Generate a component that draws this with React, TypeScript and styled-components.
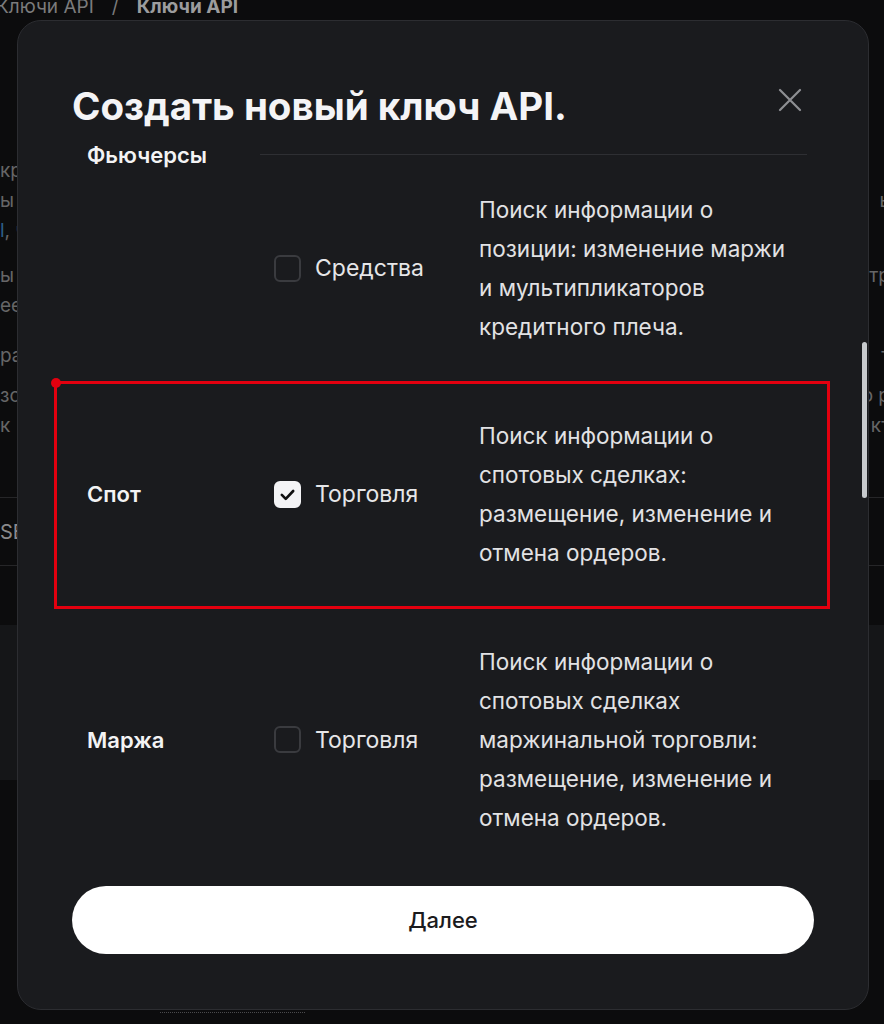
import React, { useLayoutEffect, useRef } from "react";
import styled, { createGlobalStyle, css } from "styled-components";

const GlobalStyle = createGlobalStyle`
  html, body {
    margin: 0;
    padding: 0;
    background: #0c0c0d;
    overflow: hidden;
  }
  body {
    font-family: Inter, "Noto Sans", sans-serif;
  }
  * {
    box-sizing: border-box;
  }
`;

/* ---------- page behind the dialog (only its edges show) ---------- */

const Page = styled.div`
  width: 890px;
  height: 1030px;
  overflow: hidden;
  color: #666667;
`;

const Crumbs = styled.div`
  display: flex;
  gap: 18px;
  margin: -3px 0 0 -4px;
  font-size: 19px;
  line-height: 20px;
  color: #7b7b7c;
`;

const CrumbCurrent = styled.span`
  font-weight: 700;
  color: #9c9c9d;
`;

const Intro = styled.div`
  margin-top: 139px;
  font-size: 19px;
  line-height: 30px;
`;

const Para = styled.div<{ $gap: number }>`
  margin-bottom: ${(p) => p.$gap}px;
`;

const BackLine = styled.div`
  display: flex;
  justify-content: space-between;
  height: 30px;
  white-space: nowrap;
  a {
    color: #2d5d8a;
    text-decoration: none;
  }
`;

const Tabs = styled.div`
  margin-top: 56px;
  height: 69px;
  display: flex;
  align-items: center;
  border-top: 1px solid #262628;
  border-bottom: 1px solid #262628;
  font-size: 20px;
  color: #8a8a8b;
`;

const Band = styled.div`
  margin-top: 59px;
  height: 155px;
  background: #151618;
`;

const Dotted = styled.div`
  margin: 232px 0 0 160px;
  width: 145px;
  border-top: 1px dotted #4a4a4c;
`;

/* ---------- dialog ---------- */

const Modal = styled.div`
  position: fixed;
  top: 20px;
  left: 17px;
  width: 852px;
  height: 990px;
  display: flex;
  flex-direction: column;
  padding: 0 54px 55px;
  background: #1a1b1e;
  border: 1px solid #2c2d31;
  border-radius: 24px;
`;

const Header = styled.div`
  display: flex;
  justify-content: space-between;
  align-items: flex-start;
  padding-top: 61px;
`;

const Title = styled.h2`
  margin: 0;
  font-size: 38.5px;
  line-height: 48px;
  font-weight: 700;
  color: #f4f4f6;
`;

const CloseButton = styled.button`
  width: 38px;
  height: 38px;
  margin: -1px 5px 0 0;
  display: flex;
  align-items: center;
  justify-content: center;
  padding: 0;
  border: 0;
  background: none;
  cursor: pointer;
`;

const Body = styled.div`
  flex: 1;
  min-height: 0;
  margin: 10px -54px 0;
  padding: 0 54px;
  overflow: hidden;
  position: relative;
`;

const Section = styled.div`
  position: relative;
  display: grid;
  grid-template-columns: 188px 1fr;
`;

const SectionLabel = styled.div`
  align-self: center;
  padding-left: 15px;
  font-size: 22px;
  font-weight: 600;
  color: #f3f3f4;
`;

const Row = styled.div<{ $divided?: boolean }>`
  display: grid;
  grid-template-columns: 205px 1fr;
  align-items: center;
  padding: 35px 0;
  ${(p) =>
    p.$divided &&
    css`
      border-top: 1px solid #2e2f33;
      margin-right: 7px;
    `}
`;

const Permission = styled.label`
  display: flex;
  align-items: center;
  gap: 14px;
  padding-left: 14px;
  font-size: 23px;
  color: #e6e6e8;
`;

const Box = styled.span<{ $checked?: boolean }>`
  width: 27px;
  height: 27px;
  flex: none;
  display: flex;
  align-items: center;
  justify-content: center;
  border-radius: 6px;
  border: 2px solid ${(p) => (p.$checked ? "#f4f4f6" : "#3a3b3f")};
  background: ${(p) => (p.$checked ? "#f4f4f6" : "transparent")};
`;

const Description = styled.div`
  padding-left: 14px;
  font-size: 22.5px;
  line-height: 39px;
  color: #e2e2e4;
  white-space: nowrap;
`;

const Highlight = styled.div`
  position: absolute;
  top: 0;
  bottom: -2px;
  left: -18px;
  right: -16px;
  border: 3px solid #e3000f;
  pointer-events: none;
  &::before {
    content: "";
    position: absolute;
    left: -6px;
    top: -6px;
    width: 10px;
    height: 10px;
    border-radius: 50%;
    background: #e3000f;
  }
`;

const ScrollThumb = styled.div`
  position: absolute;
  right: 1px;
  top: 321px;
  width: 5px;
  height: 156px;
  border-radius: 3px;
  background: #c7cacd;
`;

const Footer = styled.div`
  padding-top: 24px;
`;

const NextButton = styled.button`
  width: 100%;
  height: 68px;
  border: 0;
  border-radius: 34px;
  background: #ffffff;
  font-family: Inter, "Noto Sans", sans-serif;
  font-size: 22px;
  font-weight: 500;
  color: #1b1b1d;
  cursor: pointer;
`;

interface PermissionRow {
  name: string;
  checked?: boolean;
  lines: string[];
}

interface PermissionGroup {
  label: string;
  highlighted?: boolean;
  rows: PermissionRow[];
}

const groups: PermissionGroup[] = [
  {
    label: "Фьючерсы",
    rows: [
      {
        name: "Торговля",
        lines: ["Поиск информации о", "фьючерсных сделках:", "размещение, изменение и", "отмена ордеров."],
      },
      {
        name: "Средства",
        lines: ["Поиск информации о", "позиции: изменение маржи", "и мультипликаторов", "кредитного плеча."],
      },
    ],
  },
  {
    label: "Спот",
    highlighted: true,
    rows: [
      {
        name: "Торговля",
        checked: true,
        lines: ["Поиск информации о", "спотовых сделках:", "размещение, изменение и", "отмена ордеров."],
      },
    ],
  },
  {
    label: "Маржа",
    rows: [
      {
        name: "Торговля",
        lines: [
          "Поиск информации о",
          "спотовых сделках",
          "маржинальной торговли:",
          "размещение, изменение и",
          "отмена ордеров.",
        ],
      },
    ],
  },
];

// edge fragments of the page text that peek out on both sides of the dialog
const backParagraphs: { gap: number; lines: [React.ReactNode, string][] }[] = [
  {
    gap: 15,
    lines: [
      ["кр", ""],
      ["ы", "ь"],
      [<><a href="#">l</a>, ч</>, ""],
    ],
  },
  {
    gap: 20,
    lines: [
      ["ы", "тр"],
      ["ее", ""],
    ],
  },
  { gap: 10, lines: [["ра", "т"]] },
  {
    gap: 0,
    lines: [
      ["зо", "о р"],
      ["к", "кт"],
    ],
  },
];

function CheckIcon() {
  return (
    <svg width="21" height="21" viewBox="0 0 24 24" fill="none">
      <polyline points="5.5 12.5 10 17 18.5 8" stroke="#111" strokeWidth="3" strokeLinecap="round" strokeLinejoin="round" />
    </svg>
  );
}

function CloseIcon() {
  return (
    <svg width="24" height="24" viewBox="0 0 24 24" fill="none">
      <path d="M2 2L22 22M22 2L2 22" stroke="#8e8f93" strokeWidth="2.2" strokeLinecap="round" />
    </svg>
  );
}

export default function App(): JSX.Element {
  const bodyRef = useRef<HTMLDivElement>(null);
  const anchorRef = useRef<HTMLDivElement>(null);

  // the list is opened already scrolled down to the "Средства" row
  useLayoutEffect(() => {
    const body = bodyRef.current;
    const anchor = anchorRef.current;
    if (!body || !anchor) return;
    const offset = anchor.getBoundingClientRect().top - body.getBoundingClientRect().top;
    body.scrollTop = offset - 14;
  }, []);

  return (
    <>
      <GlobalStyle />
      <Page aria-hidden>
        <Crumbs>
          <span>Ключи API</span>
          <span>/</span>
          <CrumbCurrent>Ключи API</CrumbCurrent>
        </Crumbs>
        <Intro>
          {backParagraphs.map((p, i) => (
            <Para key={i} $gap={p.gap}>
              {p.lines.map(([left, right], j) => (
                <BackLine key={j}>
                  <span>{left}</span>
                  <span>{right}</span>
                </BackLine>
              ))}
            </Para>
          ))}
        </Intro>
        <Tabs>SE</Tabs>
        <Band />
        <Dotted />
      </Page>

      <Modal role="dialog">
        <Header>
          <Title>Создать новый ключ API.</Title>
          <CloseButton aria-label="Закрыть">
            <CloseIcon />
          </CloseButton>
        </Header>

        <Body ref={bodyRef}>
          {groups.map((group) => (
            <Section key={group.label}>
              <SectionLabel style={{ gridRow: `1 / span ${group.rows.length}` }}>{group.label}</SectionLabel>
              {group.rows.map((row, i) => (
                <Row
                  key={row.name}
                  $divided={i > 0}
                  ref={group.label === "Фьючерсы" && i === 1 ? anchorRef : undefined}
                >
                  <Permission>
                    <Box $checked={row.checked}>{row.checked && <CheckIcon />}</Box>
                    {row.name}
                  </Permission>
                  <Description>
                    {row.lines.map((line) => (
                      <div key={line}>{line}</div>
                    ))}
                  </Description>
                </Row>
              ))}
              {group.highlighted && <Highlight />}
            </Section>
          ))}
        </Body>

        <ScrollThumb />

        <Footer>
          <NextButton>Далее</NextButton>
        </Footer>
      </Modal>
    </>
  );
}
